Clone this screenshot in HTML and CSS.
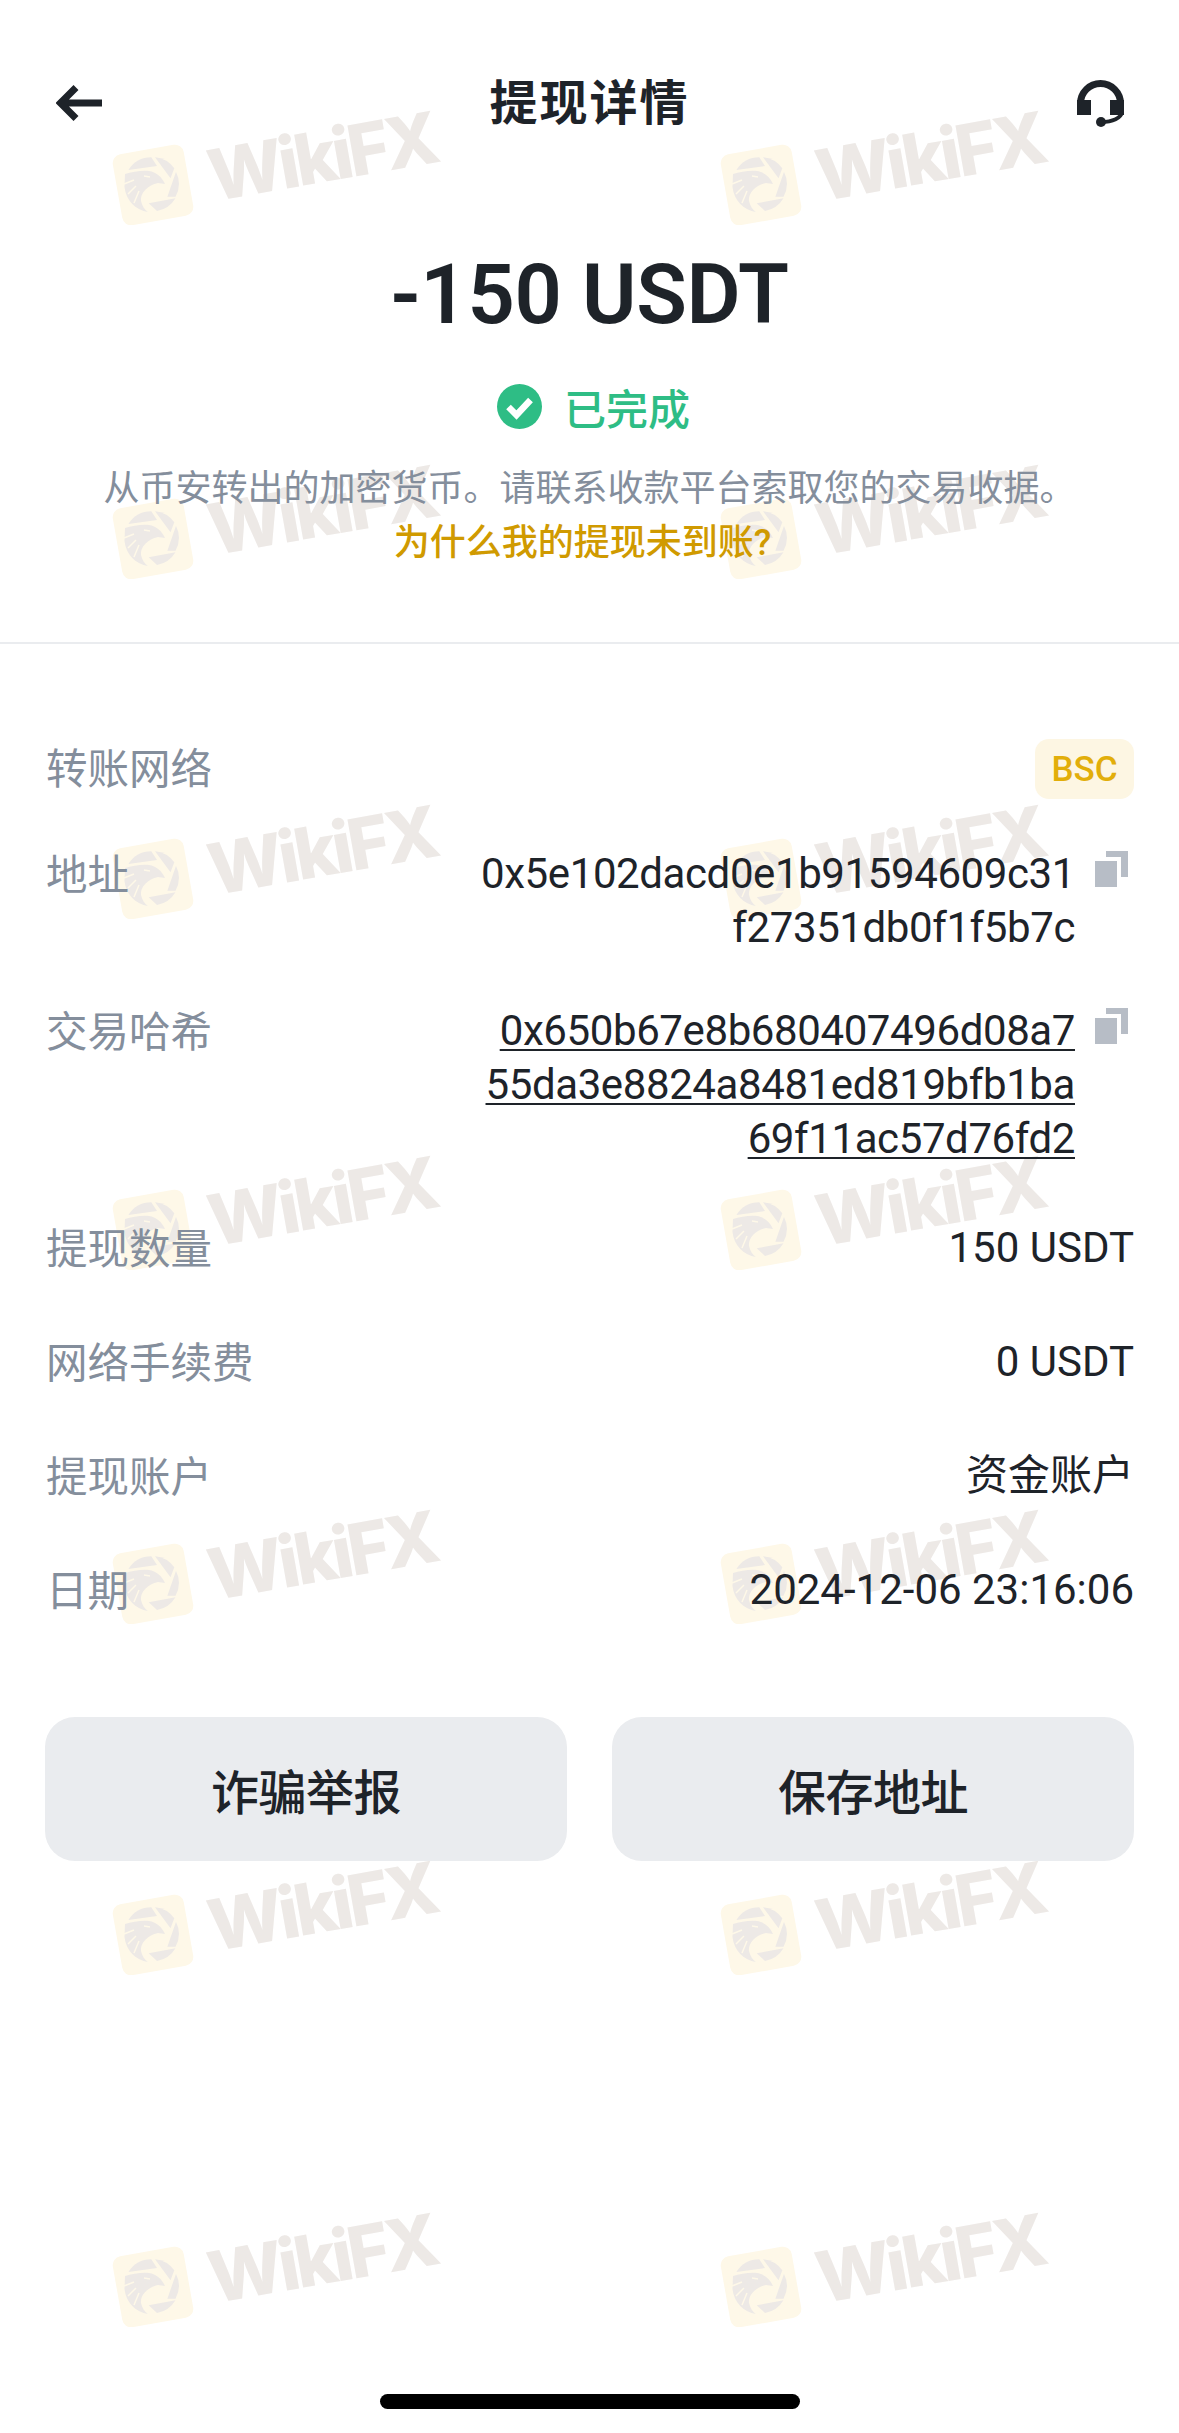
FILE: index.html
```html
<!DOCTYPE html>
<html lang="zh-CN">
<head>
    <meta charset="UTF-8">
    <meta name="viewport" content="width=device-width, initial-scale=1.0">
    <title>提现详情</title>
    <link rel="stylesheet" href="styles.css">
</head>
<body>
    <svg class="defs" width="0" height="0">
        <defs>
            <symbol id="wf-logo" viewBox="0 0 82 82">
                <rect x="5" y="6" width="72" height="72" rx="9" transform="rotate(-10 41 42)" fill="#fef8e8"/>
                <g fill="#ede9e6">
                    <path d="M16.400 27 A27 27 0 0 1 39.300 14.300 L45 23 Z"/>
                    <path d="M43 14.300 A27 27 0 0 1 62.300 25.300 L58.500 35.300 Z"/>
                    <path d="M64 28.700 A27 27 0 0 1 63.500 53.700 L55.400 53.700 Z"/>
                    <path d="M36.700 60.300 L63.500 55.300 A27 27 0 0 1 45 68 Z"/>
                    <path d="M13 31 C20 29 30 27 37 28 C44 29 50 34 53 41 L46 40 C36 42 28 50 29 58 C30 63 33 67 36 69 C24 67 14 58 12.500 44 Z"/>
                </g>
                <path d="M12 41 L22 37 M16 51 L24 43 M22 60 L27 48 M32 33 L38 34" fill="none" stroke="#fef8e8" stroke-width="1.500"/>
            </symbol>
            <symbol id="copy" viewBox="0 0 33 36">
                <path d="M0 10h22v26H0z"/>
                <path d="M11 0h22v26h-7V6H11z"/>
            </symbol>
        </defs>
    </svg>

    <div class="page">
        <div class="watermarks">
            <div class="wf"><svg class="wf-icon"><use href="#wf-logo"/></svg><span class="wf-text">WikiFX</span></div>
            <div class="wf"><svg class="wf-icon"><use href="#wf-logo"/></svg><span class="wf-text">WikiFX</span></div>
            <div class="wf"><svg class="wf-icon"><use href="#wf-logo"/></svg><span class="wf-text">WikiFX</span></div>
            <div class="wf"><svg class="wf-icon"><use href="#wf-logo"/></svg><span class="wf-text">WikiFX</span></div>
            <div class="wf"><svg class="wf-icon"><use href="#wf-logo"/></svg><span class="wf-text">WikiFX</span></div>
            <div class="wf"><svg class="wf-icon"><use href="#wf-logo"/></svg><span class="wf-text">WikiFX</span></div>
            <div class="wf"><svg class="wf-icon"><use href="#wf-logo"/></svg><span class="wf-text">WikiFX</span></div>
            <div class="wf"><svg class="wf-icon"><use href="#wf-logo"/></svg><span class="wf-text">WikiFX</span></div>
            <div class="wf"><svg class="wf-icon"><use href="#wf-logo"/></svg><span class="wf-text">WikiFX</span></div>
            <div class="wf"><svg class="wf-icon"><use href="#wf-logo"/></svg><span class="wf-text">WikiFX</span></div>
            <div class="wf"><svg class="wf-icon"><use href="#wf-logo"/></svg><span class="wf-text">WikiFX</span></div>
            <div class="wf"><svg class="wf-icon"><use href="#wf-logo"/></svg><span class="wf-text">WikiFX</span></div>
            <div class="wf"><svg class="wf-icon"><use href="#wf-logo"/></svg><span class="wf-text">WikiFX</span></div>
            <div class="wf"><svg class="wf-icon"><use href="#wf-logo"/></svg><span class="wf-text">WikiFX</span></div>
        </div>

        <header class="top-bar">
            <svg class="back" width="46" height="36" viewBox="0 0 46 36"><path d="M46 18H5M20 2.500 4.500 18 20 33.500" fill="none" stroke="#1e2329" stroke-width="7"/></svg>
            <h1 class="title">提现详情</h1>
            <svg class="support" width="47" height="47" viewBox="0 0 47 47">
                <path d="M3.500 30V23.500a20 20 0 0 1 40 0V30" fill="none" stroke="#1e2329" stroke-width="7"/>
                <path d="M0 20h14v15H0zM33 20h14v15H33z" fill="#1e2329"/>
                <path d="M45 32c-1 6-9 10-21 10" fill="none" stroke="#1e2329" stroke-width="4"/>
                <circle cx="24" cy="42" r="5" fill="#1e2329"/>
            </svg>
        </header>

        <section class="summary">
            <div class="amount">-150 USDT</div>
            <div class="status">
                <svg width="45" height="45" viewBox="0 0 45 45"><circle cx="22.500" cy="22.500" r="22.500" fill="#2ebd85"/><path d="M11.500 23l8 8 14-15" fill="none" stroke="#fff" stroke-width="6.500"/></svg>
                <span>已完成</span>
            </div>
            <p class="desc">从币安转出的加密货币。请联系收款平台索取您的交易收据。</p>
            <a class="why">为什么我的提现未到账?</a>
        </section>

        <section class="details">
            <div class="row row-network">
                <span class="label">转账网络</span>
                <span class="tag">BSC</span>
            </div>
            <div class="row row-address">
                <span class="label">地址</span>
                <div class="copy-value">
                    <div class="hash">0x5e102dacd0e1b91594609c31<br>f27351db0f1f5b7c</div>
                    <svg class="copy-icon"><use href="#copy"/></svg>
                </div>
            </div>
            <div class="row row-txid">
                <span class="label">交易哈希</span>
                <div class="copy-value">
                    <div class="hash link">0x650b67e8b680407496d08a7<br>55da3e8824a8481ed819bfb1ba<br>69f11ac57d76fd2</div>
                    <svg class="copy-icon"><use href="#copy"/></svg>
                </div>
            </div>
            <div class="row row-plain">
                <span class="label">提现数量</span>
                <span class="value">150 USDT</span>
            </div>
            <div class="row row-plain">
                <span class="label">网络手续费</span>
                <span class="value">0 USDT</span>
            </div>
            <div class="row row-plain">
                <span class="label">提现账户</span>
                <span class="value">资金账户</span>
            </div>
            <div class="row row-plain">
                <span class="label">日期</span>
                <span class="value">2024-12-06 23:16:06</span>
            </div>
        </section>

        <div class="actions">
            <button class="btn">诈骗举报</button>
            <button class="btn">保存地址</button>
        </div>

        <div class="home-bar"></div>
    </div>
</body>
</html>
```

FILE: styles.css
```css
* {
    box-sizing: border-box;
}

html, body {
    margin: 0;
    padding: 0;
    background-color: #fff;
}

body {
    font-family: Roboto, "Noto Sans CJK SC", sans-serif;
    color: #1e2329;
}

.defs {
    position: absolute;
}

.page {
    position: relative;
    height: 2433px;
    overflow: hidden;
    display: flex;
    flex-direction: column;
}

/* watermark layer, sits behind everything */
.watermarks {
    position: absolute;
    top: 110px;
    left: 112px;
    display: grid;
    grid-template-columns: repeat(2, 608px);
    grid-template-rows: 354px 340px 351px 354px 351px 352px 120px;
}

.wf {
    display: flex;
    align-items: flex-start;
    height: 120px;
}

.wf-icon {
    width: 82px;
    height: 82px;
    margin-top: 33px;
    flex: none;
}

.wf-text {
    font-family: Inter, sans-serif;
    font-weight: 800;
    font-size: 71px;
    line-height: 80px;
    letter-spacing: -4px;
    color: #ede9e6;
    transform: rotate(-10deg);
    margin-left: 13px;
    margin-top: 6px;
}

.top-bar, .summary, .details, .actions, .home-bar {
    position: relative;
}

.top-bar {
    height: 134px;
    padding: 76px 55px 0 56px;
    display: flex;
    justify-content: space-between;
    align-items: flex-start;
}

.back {
    margin-top: 9px;
}

.support {
    margin-top: 4px;
}

.title {
    margin: 0;
    font-size: 48px;
    line-height: 56px;
    font-weight: 700;
    letter-spacing: 2px;
}

.summary {
    height: 510px;
    text-align: center;
    border-bottom: 2px solid #eaecef;
    display: flex;
    flex-direction: column;
    align-items: center;
}

.amount {
    margin-top: 112px;
    font-size: 83px;
    line-height: 98px;
    font-weight: 650;
    letter-spacing: -0.300px;
}

.status {
    margin-top: 40px;
    margin-left: 8px;
    display: flex;
    align-items: center;
    gap: 22px;
    height: 45px;
    font-size: 42px;
    font-weight: 500;
    color: #2ebd85;
}

.desc {
    margin: 33px 0 0;
    font-size: 36px;
    line-height: 54px;
    color: #848e9c;
}

.why {
    margin-right: 14px;
    font-size: 36px;
    line-height: 54px;
    font-weight: 500;
    color: #d09a00;
}

.details {
    padding: 95px 45px 0 46px;
}

.row {
    display: flex;
    justify-content: space-between;
    align-items: flex-start;
}

.label {
    padding-top: 2px;
    font-size: 41.500px;
    line-height: 54px;
    color: #848e9c;
}

.row-network {
    height: 60px;
    align-items: center;
}

.tag {
    width: 99px;
    height: 60px;
    border-radius: 14px;
    background-color: #fdf6e3;
    color: #e2ae0a;
    font-size: 35px;
    font-weight: 500;
    display: flex;
    align-items: center;
    justify-content: center;
}

.row-address {
    margin-top: 48px;
    height: 157px;
}

.row-txid {
    height: 217px;
}

.row-plain {
    height: 114px;
}

.copy-value {
    display: flex;
    align-items: flex-start;
    gap: 20px;
}

.hash {
    text-align: right;
    font-size: 42px;
    line-height: 54px;
    letter-spacing: -0.400px;
}

.link {
    text-decoration: underline;
    text-decoration-thickness: 2px;
    text-underline-offset: 4px;
}

.copy-icon {
    width: 33px;
    height: 36px;
    fill: #b7bdc6;
    margin-top: 4px;
    margin-right: 6px;
}

.value {
    font-size: 42px;
    line-height: 54px;
}

.actions {
    margin-top: 40px;
    padding: 0 45px;
    display: flex;
    gap: 45px;
}

.btn {
    flex: 1;
    height: 144px;
    border: none;
    border-radius: 30px;
    background-color: #eaecef;
    color: #1e2329;
    font-family: inherit;
    font-size: 48px;
    font-weight: 500;
    letter-spacing: -0.500px;
}

.home-bar {
    position: absolute;
    left: 380px;
    bottom: 24px;
    width: 420px;
    height: 15px;
    border-radius: 8px;
    background-color: #000;
}
```
